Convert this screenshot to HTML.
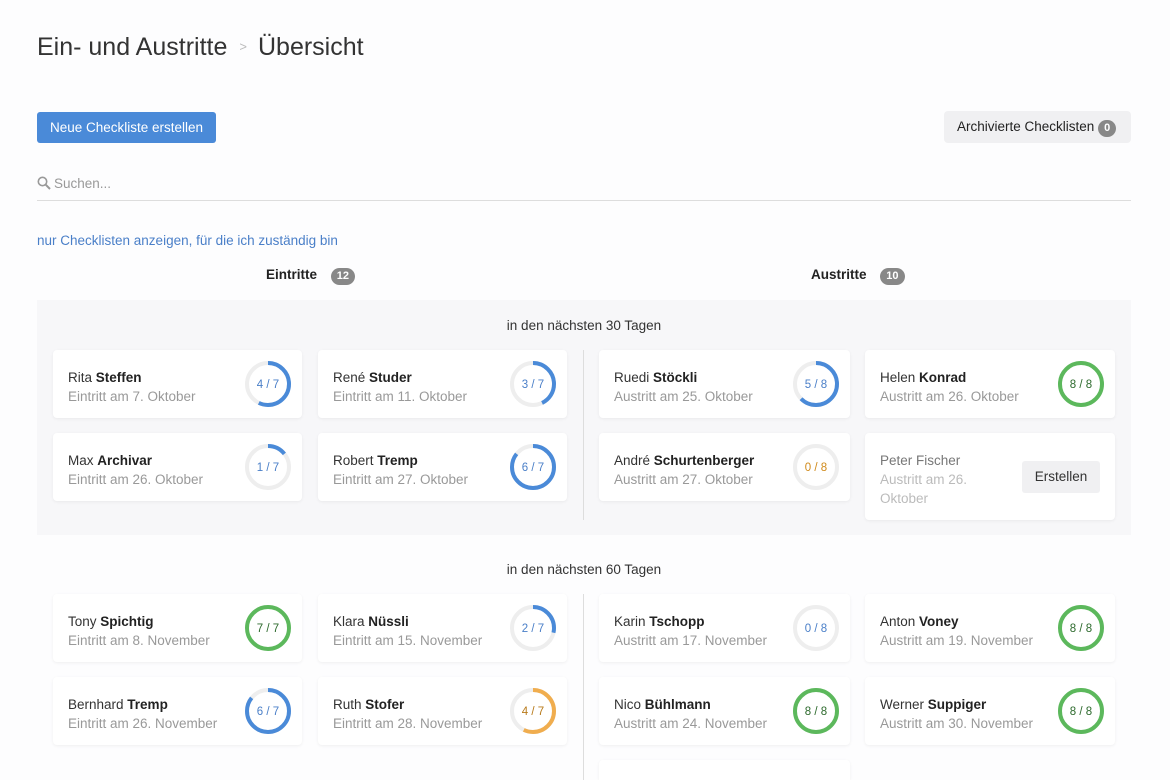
<!DOCTYPE html>
<html><head><meta charset="utf-8">
<style>
*{box-sizing:border-box;margin:0;padding:0}
html,body{width:1170px;height:780px;overflow:hidden}
body{background:#fdfdfe;font-family:"Liberation Sans",sans-serif;color:#333;position:relative}
.abs{position:absolute}
h1{position:absolute;left:37px;top:33px;font-size:25px;font-weight:normal;color:#333;white-space:nowrap}
h1 .sep{color:#bbb;font-size:13px;margin:0 11px 0 12px;position:relative;top:-4px}
.btn{position:absolute;left:37px;top:112px;width:179px;height:31px;background:#4a8ad8;border-radius:3px;color:#fff;font-size:13.5px;text-align:center;line-height:31px}
.arch{position:absolute;left:944px;top:111px;width:187px;height:32px;background:#f0f0f2;border-radius:4px;font-size:13.5px;line-height:32px;padding-left:13px;color:#222;white-space:nowrap}
.badge{display:inline-block;background:#888;color:#fff;border-radius:9px;font-size:11px;font-weight:bold;line-height:17px;padding:0 6px;text-align:center}
.search{position:absolute;left:37px;top:176px;font-size:13.5px;color:#999}
.line{position:absolute;left:37px;top:200px;width:1094px;height:1px;background:#ddd}
.link{position:absolute;left:37px;top:233px;font-size:13.5px;color:#4a7fc8}
.colh{position:absolute;top:267px;font-size:13.5px;font-weight:bold;color:#222}
.sec{position:absolute;left:37px;top:300px;width:1094px;height:235px;background:#f7f7f9}
.st{position:absolute;width:1094px;left:37px;text-align:center;font-size:13.5px;color:#333}
.div{position:absolute;left:583px;width:1px;background:#ddd}
.card{position:absolute;background:#fff;border-radius:4px;box-shadow:0 1px 3px rgba(0,0,0,.06);height:68px;padding:18px 0 0 15px;font-size:13.5px;line-height:19px}
.card .n{color:#333}
.card .n b{font-weight:bold;color:#222}
.card .d{color:#999}
.card svg{position:absolute;right:11px;top:11px}
.card svg text{font-size:11.5px;font-family:"Liberation Sans",sans-serif}
</style></head><body>
<h1>Ein- und Austritte<span class="sep">&gt;</span>Übersicht</h1>
<div class="btn">Neue Checkliste erstellen</div>
<div class="arch">Archivierte Checklisten <span class="badge">0</span></div>
<div class="search"><svg width="14" height="14" viewBox="0 0 14 14" style="vertical-align:-2px;margin-right:3px"><circle cx="5.5" cy="5.5" r="4.2" fill="none" stroke="#999" stroke-width="1.6"/><path d="M8.6 8.6 L13 13" stroke="#999" stroke-width="2"/></svg>Suchen...</div>
<div class="line"></div>
<div class="link">nur Checklisten anzeigen, für die ich zuständig bin</div>
<div class="colh" style="left:266px">Eintritte <span class="badge" style="margin-left:10px">12</span></div>
<div class="colh" style="left:811px">Austritte <span class="badge" style="margin-left:10px">10</span></div>
<div class="sec"></div>
<div class="st" style="top:318px">in den nächsten 30 Tagen</div>
<div class="div" style="top:350px;height:170px"></div>
<div class="st" style="top:562px">in den nächsten 60 Tagen</div>
<div class="div" style="top:594px;height:186px"></div>

<div class="card" style="left:53px;top:350px;width:249px"><div class="n">Rita <b>Steffen</b></div><div class="d">Eintritt am 7. Oktober</div>
<svg width="46" height="46"><circle cx="23" cy="23" r="21" fill="none" stroke="#eee" stroke-width="4"/><circle cx="23" cy="23" r="21" fill="none" stroke="#4a8ad8" stroke-width="4" stroke-dasharray="75.4 132" transform="rotate(-90 23 23)"/><text x="23" y="27" text-anchor="middle" fill="#4a7fc8">4 / 7</text></svg></div>
<div class="card" style="left:318px;top:350px;width:249px"><div class="n">René <b>Studer</b></div><div class="d">Eintritt am 11. Oktober</div>
<svg width="46" height="46"><circle cx="23" cy="23" r="21" fill="none" stroke="#eee" stroke-width="4"/><circle cx="23" cy="23" r="21" fill="none" stroke="#4a8ad8" stroke-width="4" stroke-dasharray="56.5 132" transform="rotate(-90 23 23)"/><text x="23" y="27" text-anchor="middle" fill="#4a7fc8">3 / 7</text></svg></div>
<div class="card" style="left:599px;top:350px;width:251px"><div class="n">Ruedi <b>Stöckli</b></div><div class="d">Austritt am 25. Oktober</div>
<svg width="46" height="46"><circle cx="23" cy="23" r="21" fill="none" stroke="#eee" stroke-width="4"/><circle cx="23" cy="23" r="21" fill="none" stroke="#4a8ad8" stroke-width="4" stroke-dasharray="82.5 132" transform="rotate(-90 23 23)"/><text x="23" y="27" text-anchor="middle" fill="#4a7fc8">5 / 8</text></svg></div>
<div class="card" style="left:865px;top:350px;width:250px"><div class="n">Helen <b>Konrad</b></div><div class="d">Austritt am 26. Oktober</div>
<svg width="46" height="46"><circle cx="23" cy="23" r="21" fill="none" stroke="#5cb85c" stroke-width="4"/><text x="23" y="27" text-anchor="middle" fill="#2d6a2d">8 / 8</text></svg></div>

<div class="card" style="left:53px;top:433px;width:249px"><div class="n">Max <b>Archivar</b></div><div class="d">Eintritt am 26. Oktober</div>
<svg width="46" height="46"><circle cx="23" cy="23" r="21" fill="none" stroke="#eee" stroke-width="4"/><circle cx="23" cy="23" r="21" fill="none" stroke="#4a8ad8" stroke-width="4" stroke-dasharray="18.8 132" transform="rotate(-90 23 23)"/><text x="23" y="27" text-anchor="middle" fill="#4a7fc8">1 / 7</text></svg></div>
<div class="card" style="left:318px;top:433px;width:249px"><div class="n">Robert <b>Tremp</b></div><div class="d">Eintritt am 27. Oktober</div>
<svg width="46" height="46"><circle cx="23" cy="23" r="21" fill="none" stroke="#eee" stroke-width="4"/><circle cx="23" cy="23" r="21" fill="none" stroke="#4a8ad8" stroke-width="4" stroke-dasharray="113 132" transform="rotate(-90 23 23)"/><text x="23" y="27" text-anchor="middle" fill="#4a7fc8">6 / 7</text></svg></div>
<div class="card" style="left:599px;top:433px;width:251px"><div class="n">André <b>Schurtenberger</b></div><div class="d">Austritt am 27. Oktober</div>
<svg width="46" height="46"><circle cx="23" cy="23" r="21" fill="none" stroke="#eee" stroke-width="4"/><text x="23" y="27" text-anchor="middle" fill="#d08a1a">0 / 8</text></svg></div>
<div class="card" style="left:865px;top:433px;width:250px;height:87px"><div class="n" style="color:#777">Peter Fischer</div><div class="d" style="color:#bbb;width:110px">Austritt am 26. Oktober</div>
<div class="abs" style="right:15px;top:28px;width:78px;height:32px;background:#f0f0f2;border-radius:3px;text-align:center;line-height:32px;color:#333">Erstellen</div></div>

<div class="card" style="left:53px;top:594px;width:249px"><div class="n">Tony <b>Spichtig</b></div><div class="d">Eintritt am 8. November</div>
<svg width="46" height="46"><circle cx="23" cy="23" r="21" fill="none" stroke="#5cb85c" stroke-width="4"/><text x="23" y="27" text-anchor="middle" fill="#2d6a2d">7 / 7</text></svg></div>
<div class="card" style="left:318px;top:594px;width:249px"><div class="n">Klara <b>Nüssli</b></div><div class="d">Eintritt am 15. November</div>
<svg width="46" height="46"><circle cx="23" cy="23" r="21" fill="none" stroke="#eee" stroke-width="4"/><circle cx="23" cy="23" r="21" fill="none" stroke="#4a8ad8" stroke-width="4" stroke-dasharray="37.7 132" transform="rotate(-90 23 23)"/><text x="23" y="27" text-anchor="middle" fill="#4a7fc8">2 / 7</text></svg></div>
<div class="card" style="left:599px;top:594px;width:251px"><div class="n">Karin <b>Tschopp</b></div><div class="d">Austritt am 17. November</div>
<svg width="46" height="46"><circle cx="23" cy="23" r="21" fill="none" stroke="#eee" stroke-width="4"/><text x="23" y="27" text-anchor="middle" fill="#4a7fc8">0 / 8</text></svg></div>
<div class="card" style="left:865px;top:594px;width:250px"><div class="n">Anton <b>Voney</b></div><div class="d">Austritt am 19. November</div>
<svg width="46" height="46"><circle cx="23" cy="23" r="21" fill="none" stroke="#5cb85c" stroke-width="4"/><text x="23" y="27" text-anchor="middle" fill="#2d6a2d">8 / 8</text></svg></div>

<div class="card" style="left:53px;top:677px;width:249px"><div class="n">Bernhard <b>Tremp</b></div><div class="d">Eintritt am 26. November</div>
<svg width="46" height="46"><circle cx="23" cy="23" r="21" fill="none" stroke="#eee" stroke-width="4"/><circle cx="23" cy="23" r="21" fill="none" stroke="#4a8ad8" stroke-width="4" stroke-dasharray="113 132" transform="rotate(-90 23 23)"/><text x="23" y="27" text-anchor="middle" fill="#4a7fc8">6 / 7</text></svg></div>
<div class="card" style="left:318px;top:677px;width:249px"><div class="n">Ruth <b>Stofer</b></div><div class="d">Eintritt am 28. November</div>
<svg width="46" height="46"><circle cx="23" cy="23" r="21" fill="none" stroke="#eee" stroke-width="4"/><circle cx="23" cy="23" r="21" fill="none" stroke="#f0ad4e" stroke-width="4" stroke-dasharray="75.4 132" transform="rotate(-90 23 23)"/><text x="23" y="27" text-anchor="middle" fill="#b87a1a">4 / 7</text></svg></div>
<div class="card" style="left:599px;top:677px;width:251px"><div class="n">Nico <b>Bühlmann</b></div><div class="d">Austritt am 24. November</div>
<svg width="46" height="46"><circle cx="23" cy="23" r="21" fill="none" stroke="#5cb85c" stroke-width="4"/><text x="23" y="27" text-anchor="middle" fill="#2d6a2d">8 / 8</text></svg></div>
<div class="card" style="left:865px;top:677px;width:250px"><div class="n">Werner <b>Suppiger</b></div><div class="d">Austritt am 30. November</div>
<svg width="46" height="46"><circle cx="23" cy="23" r="21" fill="none" stroke="#5cb85c" stroke-width="4"/><text x="23" y="27" text-anchor="middle" fill="#2d6a2d">8 / 8</text></svg></div>

<div class="card" style="left:599px;top:760px;width:251px;height:20px;border-radius:4px 4px 0 0"></div>
</body></html>
